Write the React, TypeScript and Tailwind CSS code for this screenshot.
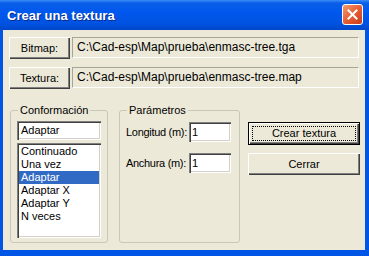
import type { ReactNode } from 'react';

const sunken = 'shadow-[inset_1px_1px_0_#808080,inset_2px_2px_0_#404040,inset_-1px_-1px_0_#ffffff,inset_-2px_-2px_0_#d4d0c8]';
const raised = 'shadow-[inset_1px_1px_0_#ffffff,inset_-1px_-1px_0_#404040,inset_-2px_-2px_0_#808080]';

const Boton = ({ children, className = '' }: { children: ReactNode; className?: string }) => (
  <button className={`flex items-center justify-center bg-[#ece9d8] ${raised} ${className}`}>
    {children}
  </button>
);

const Campo = ({ value }: { value: string }) => (
  <div className="w-[287px] h-[21px] flex items-center pl-[4px] text-[12px] whitespace-nowrap border border-t-[#a7a696] border-l-[#a7a696] border-b-white border-r-white">
    {value}
  </div>
);

const opciones = ['Continuado', 'Una vez', 'Adaptar', 'Adaptar X', 'Adaptar Y', 'N veces'];

export default function App() {
  return (
    <div className="w-[369px] h-[256px] flex flex-col bg-[#0055e5] text-[11px] leading-[13px] text-black font-['Liberation_Sans',Arial,sans-serif]">
      {/* Barra de título */}
      <div className="h-[30px] shrink-0 flex items-center justify-between pl-[7px] pr-[6px] bg-[linear-gradient(to_bottom,#3a8cf8_0px,#0a5ee6_3px,#0058ee_12px,#0052e0_24px,#0046c8_30px)]">
        <span className="text-white font-bold text-[13px] [text-shadow:1px_1px_0_#0a2a8a]">Crear una textura</span>
        <div className="w-[21px] h-[21px] mt-[-1px] rounded-[3px] border border-white bg-[linear-gradient(135deg,#f29a70,#e55a30_55%,#c83c18)] flex items-center justify-center">
          <svg width="11" height="11" viewBox="0 0 11 11">
            <path d="M1.5 1.5 L9.5 9.5 M9.5 1.5 L1.5 9.5" stroke="white" strokeWidth="2" strokeLinecap="square" />
          </svg>
        </div>
      </div>

      {/* Área cliente */}
      <div className="flex-1 ml-[3px] mr-[4px] mb-[6px] bg-[#ece9d8] pl-[6px] pt-[7px] flex flex-col">
        <div className="flex items-start gap-[2px]">
          <Boton className="w-[61px] h-[22px]">Bitmap:</Boton>
          <Campo value="C:\Cad-esp\Map\prueba\enmasc-tree.tga" />
        </div>
        <div className="flex items-start gap-[2px] mt-[8px]">
          <Boton className="w-[61px] h-[22px]">Textura:</Boton>
          <Campo value="C:\Cad-esp\Map\prueba\enmasc-tree.map" />
        </div>

        <div className="flex mt-[15px] ml-[1px]">
          {/* Conformación */}
          <fieldset className="w-[98px] h-[139px] border border-[#c8c8b8] rounded-[3px] px-[6px]">
            <legend className="ml-[1px] px-[2px]">Conformación</legend>
            <div className={`mt-[4px] w-[84px] h-[19px] bg-white flex items-center pl-[4px] ${sunken}`}>Adaptar</div>
            <div className={`mt-[3px] w-[84px] h-[95px] bg-white pt-[2px] px-[2px] ${sunken}`}>
              {opciones.map((o) => (
                <div
                  key={o}
                  className={`h-[13px] pl-[2px] whitespace-nowrap ${o === 'Adaptar' ? 'bg-[#316ac5] text-white' : ''}`}
                >
                  {o}
                </div>
              ))}
            </div>
          </fieldset>

          {/* Parámetros */}
          <fieldset className="ml-[11px] w-[121px] h-[139px] border border-[#c8c8b8] rounded-[3px] pl-[6px]">
            <legend className="ml-[1px] px-[2px]">Parámetros</legend>
            <div className="flex items-center mt-[5px]">
              <span className="w-[63px] shrink-0 whitespace-nowrap tracking-[-0.3px]">Longitud (m):</span>
              <div className={`w-[42px] h-[20px] shrink-0 bg-white flex items-center pl-[3px] ${sunken}`}>1</div>
            </div>
            <div className="flex items-center mt-[11px]">
              <span className="w-[63px] shrink-0 whitespace-nowrap tracking-[-0.3px]">Anchura (m):</span>
              <div className={`w-[42px] h-[20px] shrink-0 bg-white flex items-center pl-[3px] ${sunken}`}>1</div>
            </div>
          </fieldset>

          {/* Botones */}
          <div className="ml-[8px] flex flex-col">
            <div className="mt-[18px] w-[112px] h-[23px] border border-black">
              <Boton className="w-full h-full p-[3px]">
                <span className="w-full h-full flex items-center justify-center border border-dotted border-black">Crear textura</span>
              </Boton>
            </div>
            <Boton className="mt-[8px] w-[112px] h-[22px]">Cerrar</Boton>
          </div>
        </div>
      </div>
    </div>
  );
}
